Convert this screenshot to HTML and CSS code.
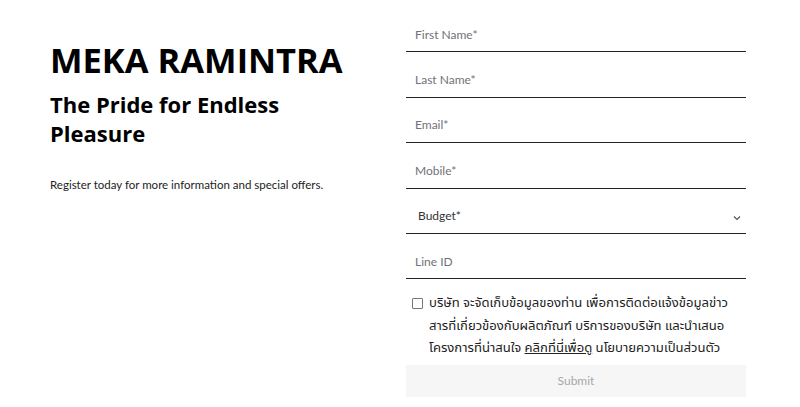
FILE: index.html
```html
<!DOCTYPE html>
<html lang="th">
<head>
    <meta charset="UTF-8">
    <meta name="viewport" content="width=device-width, initial-scale=1.0">
    <title>Meka Ramintra</title>
    <link rel="stylesheet" href="styles.css">
</head>
<body>
    <main class="register">
        <section class="intro">
            <h1>MEKA RAMINTRA</h1>
            <h2>The Pride for Endless<br>Pleasure</h2>
            <p>Register today for more information and special offers.</p>
        </section>

        <form class="register-form">
            <input type="text" class="field" placeholder="First Name*">
            <input type="text" class="field" placeholder="Last Name*">
            <input type="email" class="field" placeholder="Email*">
            <input type="tel" class="field" placeholder="Mobile*">
            <div class="field select-wrap">
                <select class="select">
                    <option>Budget*</option>
                </select>
                <svg class="chevron" width="8" height="6" viewBox="0 0 8 6"><path d="M1 1.5 L4 4.5 L7 1.5" fill="none" stroke="#555" stroke-width="1.2"/></svg>
            </div>
            <input type="text" class="field" placeholder="Line ID">

            <label class="consent">
                <span class="box"></span>
                <span class="consent-text">บริษัท จะจัดเก็บข้อมูลของท่าน เพื่อการติดต่อแจ้งข้อมูลข่าว<br>สารที่เกี่ยวข้องกับผลิตภัณฑ์ บริการของบริษัท และนำเสนอ<br>โครงการที่น่าสนใจ <a href="#">คลิกที่นี่เพื่อดู</a> นโยบายความเป็นส่วนตัว</span>
            </label>

            <button type="button" class="submit">Submit</button>
        </form>
    </main>
</body>
</html>
```

FILE: styles.css
```css
/* Общие стили */
body {
    margin: 0;
    font-family: Lato, "Noto Sans Thai", sans-serif;
    color: #000;
    background: #fff;
}

.register {
    display: flex;
    padding: 0 54px 0 50px;
    gap: 40px;
}

/* Левая колонка */
.intro {
    flex: 1;
    padding-top: 36px;
    font-family: "Open Sans", sans-serif;
}

.intro h1 {
    margin: 0;
    font-size: 34.5px;
    font-weight: 700;
    line-height: 48px;
}

.intro h2 {
    margin: 6px 0 0;
    font-size: 22px;
    font-weight: 700;
    line-height: 29px;
}

.intro p {
    margin: 30px 0 0;
    font-family: Lato, sans-serif;
    font-size: 11.5px;
    color: #222;
}

/* Форма */
.register-form {
    width: 340px;
    display: flex;
    flex-direction: column;
    padding-top: 7px;
}

.field {
    box-sizing: border-box;
    height: 45.4px;
    border: none;
    border-bottom: 1px solid #222;
    padding: 10px 9px 0;
    font-family: inherit;
    font-size: 12px;
    outline: none;
    background: transparent;
}

.field::placeholder {
    color: #707278;
}

.select-wrap {
    position: relative;
    padding: 0;
}

.select {
    width: 100%;
    height: 100%;
    border: none;
    padding: 10px 12px 0;
    font-family: inherit;
    font-size: 12px;
    color: #333;
    background: transparent;
    appearance: none;
    outline: none;
}

.chevron {
    position: absolute;
    right: 5px;
    top: 26px;
}

.consent {
    display: flex;
    gap: 6px;
    padding: 13px 6px 0;
    font-family: "Noto Sans Thai", sans-serif;
    font-size: 13.1px;
    line-height: 22.5px;
    color: #222;
    white-space: nowrap;
}

.box {
    flex: none;
    width: 9px;
    height: 9px;
    margin-top: 6px;
    border: 1px solid #777;
    border-radius: 1px;
}

.consent a {
    color: #222;
}

.submit {
    margin-top: 5px;
    height: 32px;
    border: none;
    background: #f6f6f6;
    color: #a8a8a8;
    font-family: inherit;
    font-size: 12px;
}
```
